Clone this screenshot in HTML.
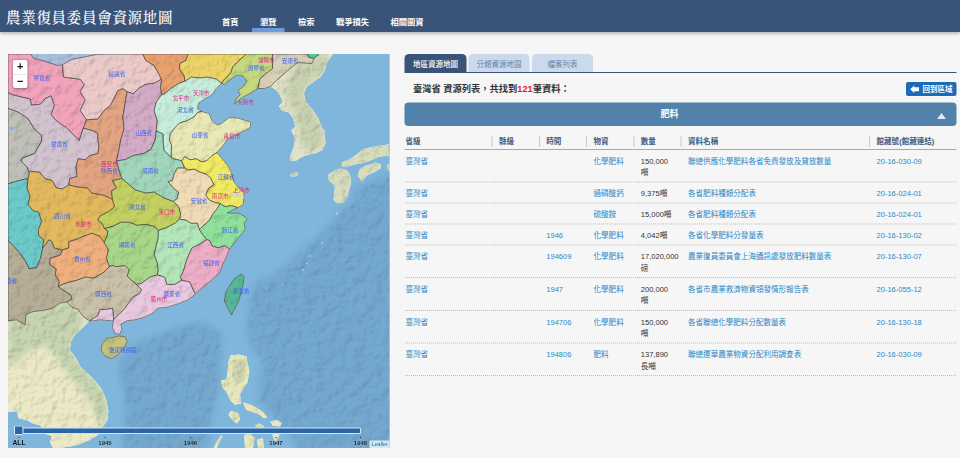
<!DOCTYPE html>
<html lang="zh-Hant">
<head>
<meta charset="utf-8">
<title>農業復員委員會資源地圖</title>
<style>
html,body{margin:0;padding:0;background:#f6f6f6;overflow:hidden;width:960px;height:458px;}
#root{position:absolute;left:0;top:0;width:1920px;height:916px;transform:scale(0.5);transform-origin:0 0;background:#f6f6f6;font-family:"Liberation Sans","Noto Sans CJK TC",sans-serif;color:#333;overflow:hidden;}
#hdr{position:absolute;left:0;top:0;width:1920px;height:64px;background:#3a5479;box-shadow:0 2px 8px rgba(0,0,0,.35);z-index:5;}
#hdr h1{position:absolute;left:12px;top:16px;margin:0;font-family:"Liberation Serif","Noto Serif CJK SC",serif;font-weight:500;font-size:29px;line-height:40px;letter-spacing:1.4px;color:#fff;white-space:nowrap;}
#nav{position:absolute;left:428px;top:30px;height:34px;white-space:nowrap;font-size:0;}
#nav a{display:inline-block;height:34px;padding:0 16px;margin-right:11px;font-size:16.5px;line-height:28px;font-weight:700;color:#fff;text-decoration:none;box-sizing:border-box;}
#nav a.on{border-bottom:8px solid #6b9bdc;}
#map{position:absolute;left:16px;top:108px;width:763px;height:788px;background:#7fb3d8;overflow:hidden;}
#map svg{position:absolute;left:0;top:0;}
#zoomc{position:absolute;left:10px;top:12px;width:29px;border-radius:4px;background:#fff;box-shadow:0 1px 5px rgba(0,0,0,.4);}
#zoomc div{height:27.5px;text-align:center;font:bold 22px/25px "Liberation Sans",sans-serif;color:#111;}
#zoomc div+div{border-top:1px solid #ccc;}
#trk{position:absolute;left:14px;top:747px;width:688px;height:9px;background:#2a65a8;border:2px solid #d4e4f4;border-radius:2px;}
#hnd{position:absolute;left:12px;top:743px;width:15px;height:15px;background:#2a65a8;border:2px solid #dcebf8;border-radius:3px;}
.tk{position:absolute;top:766px;width:60px;margin-left:-30px;text-align:center;font:bold 12px/14px "Liberation Sans",sans-serif;color:#16202b;text-shadow:0 0 2px rgba(255,255,255,.5);}
.tk:before{content:"";display:block;width:2px;height:2px;background:#222;margin:0 auto 3px;}
.tk b{font-size:13.5px;color:#0a0a0a;}
#attr{position:absolute;right:0;bottom:0;height:15px;padding:0 4px;background:rgba(255,255,255,.72);font:10.5px/15px "Liberation Sans",sans-serif;color:#0078a8;}
#right{position:absolute;left:809px;top:108px;width:1104px;}
#tabs{height:36px;border-bottom:2px solid #3a5479;white-space:nowrap;font-size:0;}
#tabs span{display:inline-block;width:122px;height:36px;margin-right:5px;border-radius:9px 9px 0 0;background:#ccd9ea;color:#5f82aa;font-size:15px;line-height:41px;vertical-align:top;overflow:hidden;text-align:center;}
#tabs span.on{background:#3a5479;color:#fff;font-weight:500;width:124px;margin-right:4px;}
#ttl{position:absolute;left:17px;top:54px;font-size:18.5px;line-height:30px;font-weight:700;color:#333;white-space:nowrap;}
#ttl b{color:#f5141c;}
#back{position:absolute;right:0;top:56px;width:101px;height:28px;border-radius:4px;background:#1c6bb9;color:#fff;font-size:15px;line-height:28px;font-weight:700;box-shadow:0 0 0 1px rgba(255,255,255,.6);}
#back svg{position:absolute;left:8px;top:5.5px;}
#back span{position:absolute;left:33px;top:0;white-space:nowrap;}
#sec{position:absolute;left:0;top:97px;width:1104px;height:47px;box-sizing:border-box;padding-right:44px;border-radius:8px;background:#5281a9;color:#fff;font-size:18px;line-height:47px;font-weight:700;text-align:center;}
#sec i{position:absolute;right:21px;top:21px;width:0;height:0;border-left:9px solid transparent;border-right:9px solid transparent;border-bottom:12px solid #dde7f5;}
#tbl{position:absolute;left:0;top:144.5px;width:1104px;border-collapse:collapse;font-size:15.1px;line-height:23px;table-layout:fixed;}
#tbl th{padding:18px 0 4px 0;text-align:left;color:#3f5c82;font-weight:700;border-bottom:2px solid #8eb0cd;white-space:nowrap;}
#tbl th span{display:block;border-left:2px solid #bccbde;padding-left:13px;}
#tbl th:first-child span{border-left:0;padding-left:2px;}
#tbl tr{background:repeating-linear-gradient(90deg,#a6bfd9 0,#a6bfd9 2px,transparent 2px,transparent 4px) 1px 100%/100% 2px no-repeat;}
#tbl tr:first-child{background:none;}
#tbl td{padding:10px 0 9.2px 15px;vertical-align:top;color:#333;}
#tbl td:first-child{padding-left:2px;}
#tbl td.l{color:#2b87c8;}
</style>
</head>
<body>
<div id="root">
<div id="hdr">
<h1>農業復員委員會資源地圖</h1>
<div id="nav"><a>首頁</a><a class="on">瀏覽</a><a>檢索</a><a>戰爭損失</a><a>相關圖資</a></div>
</div>
<div id="map">
<svg width="763" height="788" viewBox="8 54 381.5 394">
<defs>
<filter id="b3" x="-20%" y="-20%" width="140%" height="140%"><feGaussianBlur stdDeviation="3"/></filter>
<filter id="b2" x="-20%" y="-20%" width="140%" height="140%"><feGaussianBlur stdDeviation="2"/></filter>
<filter id="relief" x="0" y="0" width="100%" height="100%" color-interpolation-filters="sRGB">
<feTurbulence type="fractalNoise" baseFrequency="0.11" numOctaves="4" seed="7" result="n"/>
<feDiffuseLighting in="n" surfaceScale="0.48" diffuseConstant="1.40" lighting-color="#ffffff" result="l"><feDistantLight azimuth="225" elevation="45"/></feDiffuseLighting>
<feComposite in="l" in2="SourceGraphic" operator="in" result="lc"/>
<feBlend in="SourceGraphic" in2="lc" mode="multiply"/>
</filter>
<filter id="relief2" x="0" y="0" width="100%" height="100%" color-interpolation-filters="sRGB">
<feTurbulence type="fractalNoise" baseFrequency="0.1" numOctaves="3" seed="11" result="n"/>
<feDiffuseLighting in="n" surfaceScale="0.35" diffuseConstant="1.40" lighting-color="#ffffff" result="l"><feDistantLight azimuth="225" elevation="45"/></feDiffuseLighting>
<feComposite in="l" in2="SourceGraphic" operator="in" result="lc"/>
<feBlend in="SourceGraphic" in2="lc" mode="multiply"/>
</filter>
<mask id="dm" maskUnits="userSpaceOnUse" x="0" y="46" width="400" height="410"><g filter="url(#b3)" fill="#fff">
<path d="M392,172 372,180 356,188 350,204 338,214 322,232 300,252 276,274 256,282 250,300 246,330 254,352 262,360 258,400 286,430 300,452 396,452 396,172Z"/>
<path d="M150,338 180,326 205,322 222,334 220,380 212,420 205,452 122,452 126,404 118,368 128,348Z"/>
</g></mask>
<clipPath id="sea"><path d="M8.0,320.8 16.7,319.8 25.0,325.0 26.0,314.6 33.3,311.5 43.8,310.4 52.1,308.3 60.4,303.1 66.7,302.1 71.9,307.3 78.1,309.4 83.3,316.7 89.6,320.8 82.3,328.1 75.0,334.4 70.8,341.7 69.8,350.0 76.0,358.3 80.2,366.7 87.5,373.4 95.8,381.8 102.1,390.1 106.3,400.5 108.3,410.9 107.3,420.3 102.1,427.6 97.9,434.9 89.6,440.1 79.2,444.3 70.8,446.3 62.5,447.4 60.0,450.0 54.2,450.0 50.0,442.2 52.1,435.9 44.8,433.8 40.6,425.5 33.3,423.4 27.1,420.3 18.8,418.2 16.7,411.3 8.0,412.0Z"/></clipPath><clipPath id="kor"><path d="M270.4,86.5 275.6,89.6 279.8,94.8 282.9,102.1 278.8,106.3 281.9,110.4 289.2,112.5 293.3,118.8 295.4,127.1 291.3,130.2 295.0,138.1 293.7,147.6 290.3,155.7 290.3,160.5 296.4,160.5 302.5,156.4 309.3,154.4 316.0,153.0 322.1,150.3 325.5,143.5 324.8,136.8 324.2,130.0 322.5,129.2 318.3,118.8 313.1,110.4 305.8,102.1 303.8,93.8 306.9,86.5 314.2,81.3 320.4,77.1 324.6,70.8 326.7,62.5 332.9,54.2 332.9,50.0 272.0,50.0 272.0,70.0Z"/></clipPath>
</defs>
<rect x="8" y="54" width="382" height="394" fill="#80b6dc"/>
<g id="deep" mask="url(#dm)"><rect x="0" y="46" width="400" height="410" fill="#74a8ce" filter="url(#relief2)"/></g>
<g filter="url(#relief)"><g id="base"><path d="M30.8,54.0 33.3,58.3 41.7,60.4 58.3,65.6 62.5,64.6 71.9,59.4 87.5,56.3 97.9,54.2 97.9,50.0 30.0,50.0Z" fill="#a9bedb"/><path d="M270.4,86.5 275.6,89.6 279.8,94.8 282.9,102.1 278.8,106.3 281.9,110.4 289.2,112.5 293.3,118.8 295.4,127.1 291.3,130.2 295.0,138.1 293.7,147.6 290.3,155.7 290.3,160.5 296.4,160.5 302.5,156.4 309.3,154.4 316.0,153.0 322.1,150.3 325.5,143.5 324.8,136.8 324.2,130.0 322.5,129.2 318.3,118.8 313.1,110.4 305.8,102.1 303.8,93.8 306.9,86.5 314.2,81.3 320.4,77.1 324.6,70.8 326.7,62.5 332.9,54.2 332.9,50.0 272.0,50.0 272.0,70.0Z" fill="#e0e3c8"/><g clip-path="url(#kor)"><path d="M300.0,56.0 328.0,54.0 324.0,72.0 314.0,80.0 306.0,88.0 304.0,96.0 308.0,104.0 315.0,112.0 320.0,122.0 323.0,132.0 323.0,145.0 316.0,150.0 306.0,152.0 300.0,140.0 298.0,125.0 294.0,112.0 288.0,100.0 284.0,90.0 290.0,75.0Z" fill="#c9d1b0" filter="url(#b3)"/></g><path d="M306.9,50.0 306.9,54.0 309.0,57.5 314.0,58.3 319.4,54.0 319.4,50.0Z" fill="#5fd095" stroke="#333" stroke-width="0.6" stroke-linejoin="round"/><ellipse cx="294.4" cy="174.5" rx="4" ry="1.9" fill="#d0d4b0" transform="rotate(-12 294.4 174.5)"/><path d="M392.0,144.0 381.0,145.6 370.2,147.6 363.4,149.0 356.7,154.4 349.9,159.1 341.8,162.5 341.8,166.6 347.2,166.6 354.0,164.5 362.1,163.2 370.2,160.5 378.3,157.1 385.1,155.7 392.0,156.4Z" fill="#d6dcbc"/><path d="M364.8,165.9 359.4,169.9 358.0,176.0 362.1,181.5 366.1,176.0 374.3,172.0 380.4,168.6 381.0,164.5 375.6,162.5 370.2,164.5Z" fill="#d6dcbc"/><path d="M340.4,168.6 335.0,170.6 328.2,174.7 328.2,180.1 333.6,184.2 335.0,188.0 334.3,193.1 333.6,199.9 337.7,203.3 343.1,202.6 347.2,197.2 349.2,189.0 351.2,182.8 349.9,174.7 347.2,170.6Z" fill="#d6dcbc"/><path d="M392.0,161.0 387.1,165.2 388.5,170.6 392.0,171.0Z" fill="#d6dcbc"/><circle cx="337" cy="213.4" r="1" fill="#c8d0a8"/><circle cx="306.7" cy="263.5" r="0.7" fill="#d8dcb8" opacity=".55"/><circle cx="310" cy="256" r="0.7" fill="#d8dcb8" opacity=".55"/><circle cx="303" cy="270" r="0.7" fill="#d8dcb8" opacity=".55"/><circle cx="283" cy="285" r="0.7" fill="#d8dcb8" opacity=".55"/><circle cx="266" cy="288" r="0.7" fill="#d8dcb8" opacity=".55"/><circle cx="322" cy="243" r="0.7" fill="#d8dcb8" opacity=".55"/><path d="M8.0,320.8 16.7,319.8 25.0,325.0 26.0,314.6 33.3,311.5 43.8,310.4 52.1,308.3 60.4,303.1 66.7,302.1 71.9,307.3 78.1,309.4 83.3,316.7 89.6,320.8 82.3,328.1 75.0,334.4 70.8,341.7 69.8,350.0 76.0,358.3 80.2,366.7 87.5,373.4 95.8,381.8 102.1,390.1 106.3,400.5 108.3,410.9 107.3,420.3 102.1,427.6 97.9,434.9 89.6,440.1 79.2,444.3 70.8,446.3 62.5,447.4 60.0,450.0 54.2,450.0 50.0,442.2 52.1,435.9 44.8,433.8 40.6,425.5 33.3,423.4 27.1,420.3 18.8,418.2 16.7,411.3 8.0,412.0Z" fill="#ece9c6"/><g clip-path="url(#sea)"><path d="M8.0,316.0 26.0,312.0 52.0,306.0 67.0,300.0 86.0,317.0 80.0,330.0 73.0,342.0 72.0,352.0 80.0,362.0 88.0,372.0 98.0,382.0 105.0,392.0 110.0,408.0 109.0,422.0 98.0,422.0 92.0,405.0 84.0,392.0 72.0,380.0 62.0,366.0 52.0,352.0 44.0,345.0 30.0,350.0 18.0,362.0 8.0,368.0Z" fill="#c6d4b0" filter="url(#b3)"/></g><path d="M230.6,355.4 228.5,361.7 227.5,372.1 226.5,379.4 221.3,380.4 222.3,386.7 226.5,391.9 230.6,400.5 234.8,404.7 241.0,403.6 240.0,394.3 243.1,388.8 247.3,382.5 249.4,372.1 247.3,361.7 246.3,356.5 239.0,354.4Z" fill="#e6e6ba"/><path d="M243.1,402.6 250.4,404.7 256.7,407.8 262.9,412.0 267.1,417.2 264.0,418.2 258.8,414.0 252.5,412.0 246.3,409.9Z" fill="#e6e6ba"/><path d="M230.6,410.9 228.5,415.1 232.7,420.3 236.9,423.4 240.0,419.3 237.9,413.0Z" fill="#e6e6ba"/><path d="M270.2,421.3 272.3,425.5 279.6,426.5 281.7,423.4 277.5,420.3Z" fill="#e6e6ba"/><path d="M258.8,423.4 255.0,426.0 260.8,429.0 264.0,426.0Z" fill="#e6e6ba"/><path d="M244.2,434.9 245.2,450.0 252.5,450.0 254.6,438.0 250.0,434.0Z" fill="#e6e6ba"/><path d="M256.7,440.0 258.8,450.0 264.0,450.0 262.9,438.0Z" fill="#e6e6ba"/><path d="M212.9,450.0 217.1,441.1 221.3,434.9 222.5,436.0 219.0,443.0 216.0,450.0Z" fill="#e6e6ba"/><path d="M272.3,434.9 275.4,442.2 279.6,434.9 276.0,432.0Z" fill="#e6e6ba"/><path d="M233.0,360.0 243.0,359.0 246.0,370.0 244.0,381.0 238.0,384.0 232.0,377.0Z" fill="#d0d6b0"/></g>
<g id="prov"><path d="M8.0,54.0 30.8,54.0 33.3,58.3 41.7,60.4 58.3,65.6 62.5,64.6 63.5,77.0 80.2,79.2 84.4,84.4 80.2,91.7 85.4,100.0 80.2,110.4 86.5,119.8 83.3,128.1 79.2,140.6 74.0,135.4 66.7,128.0 56.3,120.8 51.0,114.6 54.2,105.2 51.0,95.8 44.8,99.0 40.6,104.2 31.3,105.2 30.2,99.0 20.8,96.9 12.5,94.8 8.0,92.7Z" fill="#f1a4bb" stroke="#333" stroke-width="0.6" stroke-linejoin="round"/><path d="M8.0,92.7 12.5,94.8 20.8,96.9 30.2,99.0 31.3,105.2 40.6,104.2 44.8,99.0 51.0,95.8 54.2,105.2 51.0,114.6 56.3,120.8 66.7,128.0 74.0,135.4 79.2,140.6 83.3,128.1 91.7,130.2 97.9,133.3 97.9,140.0 99.0,146.3 97.9,153.5 89.6,155.6 85.4,159.8 78.1,158.8 76.0,167.1 77.1,176.5 69.8,178.5 68.8,184.8 62.5,189.0 56.3,187.9 52.1,180.6 44.8,178.5 39.6,172.3 30.2,171.3 29.2,173.3 27.1,167.1 20.8,160.8 22.9,157.7 34.4,153.5 38.5,146.3 41.5,141.0 41.7,135.4 34.4,129.2 28.1,118.8 18.8,112.5 8.0,108.3Z" fill="#d2c3cf" stroke="#333" stroke-width="0.6" stroke-linejoin="round"/><path d="M8.0,108.3 18.8,112.5 28.1,118.8 34.4,129.2 41.7,135.4 41.5,141.0 38.5,146.3 34.4,153.5 22.9,157.7 20.8,160.8 27.1,167.1 29.2,173.3 28.1,178.5 18.8,180.6 8.0,183.8Z" fill="#bfc0b8" stroke="#333" stroke-width="0.6" stroke-linejoin="round"/><path d="M8.0,183.8 18.8,180.6 28.1,178.5 27.1,187.9 30.2,196.3 28.1,204.6 33.3,210.8 38.5,211.9 41.7,221.3 38.5,229.6 38.5,235.4 43.8,239.6 42.7,247.9 40.6,258.3 36.5,267.7 29.2,268.8 25.0,260.4 18.8,252.1 11.5,243.8 8.0,240.6Z" fill="#6ccbc9" stroke="#333" stroke-width="0.6" stroke-linejoin="round"/><path d="M8.0,240.6 11.5,243.8 18.8,252.1 25.0,260.4 29.2,268.8 36.5,267.7 40.6,258.3 42.7,247.9 49.0,239.6 52.1,241.7 54.2,247.9 62.5,250.0 60.4,255.2 50.0,258.3 50.0,264.6 56.3,268.8 55.2,275.0 59.4,281.3 58.3,286.5 62.5,289.6 70.8,294.8 71.9,299.0 66.7,302.1 60.4,303.1 52.1,308.3 43.8,310.4 33.3,311.5 26.0,314.6 25.0,325.0 16.7,319.8 8.0,320.8Z" fill="#b6ae97" stroke="#333" stroke-width="0.6" stroke-linejoin="round"/><path d="M28.1,178.5 29.2,173.3 30.2,171.3 39.6,172.3 44.8,178.5 52.1,180.6 56.3,187.9 62.5,189.0 68.8,184.8 77.1,186.9 87.5,187.9 91.7,193.1 104.2,195.2 112.5,199.4 114.6,206.7 108.3,211.9 100.0,216.0 97.9,220.2 102.1,223.3 104.5,228.5 108.0,231.0 107.3,235.4 104.2,242.7 100.0,236.5 91.7,233.3 83.3,236.5 76.0,239.6 68.8,241.7 68.8,247.9 62.5,250.0 54.2,247.9 52.1,241.7 49.0,239.6 42.7,247.9 43.8,239.6 38.5,235.4 38.5,229.6 41.7,221.3 38.5,211.9 33.3,210.8 28.1,204.6 30.2,196.3 27.1,187.9Z" fill="#e2b95f" stroke="#333" stroke-width="0.6" stroke-linejoin="round"/><path d="M86.5,119.8 97.9,118.8 104.2,110.4 110.4,105.2 114.6,96.9 117.7,90.6 122.9,88.5 127.1,91.7 125.0,104.2 122.9,116.7 124.0,129.2 120.8,139.6 119.8,145.0 118.8,150.4 116.7,160.8 118.8,169.2 121.9,178.5 112.5,180.6 116.7,187.9 111.5,191.0 112.5,199.4 104.2,195.2 91.7,193.1 87.5,187.9 77.1,186.9 68.8,184.8 69.8,178.5 77.1,176.5 76.0,167.1 78.1,158.8 85.4,159.8 89.6,155.6 97.9,153.5 99.0,146.3 97.9,140.0 97.9,133.3 91.7,130.2 83.3,128.1Z" fill="#e3a482" stroke="#333" stroke-width="0.6" stroke-linejoin="round"/><path d="M62.5,64.6 71.9,59.4 87.5,56.3 97.9,54.2 142.7,54.0 145.8,60.4 154.2,65.6 158.3,72.9 161.5,79.2 154.2,83.3 145.8,84.4 138.5,88.5 133.3,93.8 127.1,91.7 122.9,88.5 117.7,90.6 114.6,96.9 110.4,105.2 104.2,110.4 97.9,118.8 86.5,119.8 80.2,110.4 85.4,100.0 80.2,91.7 84.4,84.4 80.2,79.2 63.5,77.0Z" fill="#edcaca" stroke="#333" stroke-width="0.6" stroke-linejoin="round"/><path d="M142.7,54.0 188.1,54.0 186.0,60.4 179.8,63.5 179.8,69.8 184.0,75.0 185.0,81.3 179.2,83.3 170.8,88.5 164.6,93.8 161.5,94.8 160.4,87.5 161.5,79.2 158.3,72.9 154.2,65.6 145.8,60.4Z" fill="#e9a170" stroke="#333" stroke-width="0.6" stroke-linejoin="round"/><path d="M188.1,54.0 246.5,54.0 239.2,60.4 232.9,66.7 230.8,72.9 224.6,79.2 221.5,83.3 216.3,79.2 207.9,77.1 199.6,78.1 191.3,77.1 185.0,81.3 184.0,75.0 179.8,69.8 179.8,63.5 186.0,60.4Z" fill="#edd468" stroke="#333" stroke-width="0.6" stroke-linejoin="round"/><path d="M246.5,54.0 272.5,54.0 272.5,68.8 264.2,75.0 260.0,79.2 257.9,88.5 251.7,92.7 243.3,96.9 238.1,101.0 234.6,103.8 236.0,99.0 240.2,94.8 238.1,90.6 243.3,86.5 246.5,81.3 243.3,76.0 237.1,75.0 230.8,79.2 224.6,84.4 221.5,83.3 224.6,79.2 230.8,72.9 232.9,66.7 239.2,60.4Z" fill="#c6d980" stroke="#333" stroke-width="0.6" stroke-linejoin="round"/><path d="M272.5,54.0 306.9,54.0 309.0,57.5 314.0,58.3 312.0,63.5 297.5,62.5 292.3,66.7 285.0,72.9 276.7,80.2 270.4,86.5 264.2,88.5 257.9,88.5 260.0,79.2 264.2,75.0 272.5,68.8Z" fill="#d8d0b8" stroke="#333" stroke-width="0.6" stroke-linejoin="round"/><path d="M161.5,79.2 160.4,87.5 161.5,94.8 156.3,102.1 154.2,110.4 157.3,120.8 156.3,131.0 155.2,140.0 151.0,149.4 143.8,153.5 133.3,155.6 125.0,159.8 116.7,160.8 118.8,150.4 119.8,145.0 120.8,139.6 124.0,129.2 122.9,116.7 125.0,104.2 127.1,91.7 133.3,93.8 138.5,88.5 145.8,84.4 154.2,83.3Z" fill="#d3abc6" stroke="#333" stroke-width="0.6" stroke-linejoin="round"/><path d="M185.0,81.3 191.3,77.1 199.6,78.1 207.9,77.1 216.3,79.2 221.5,83.3 216.3,88.5 212.1,94.8 204.8,99.0 198.5,103.1 197.5,108.3 201.7,111.5 197.5,112.5 194.4,116.7 187.1,120.8 179.8,122.9 174.6,128.1 170.4,133.3 169.4,139.6 171.5,145.0 171.3,152.5 171.3,157.7 164.0,150.4 162.9,140.0 163.0,134.0 156.3,131.0 157.3,120.8 154.2,110.4 156.3,102.1 161.5,94.8 164.6,93.8 170.8,88.5 179.2,83.3Z" fill="#c6eedb" stroke="#333" stroke-width="0.6" stroke-linejoin="round"/><path d="M201.7,111.5 209.0,113.5 212.1,120.8 217.3,125.0 222.5,122.9 228.8,117.7 237.1,117.7 243.3,119.8 250.6,121.9 250.6,127.1 245.4,130.2 239.2,133.3 231.9,136.5 226.7,139.6 225.0,143.0 222.3,146.3 217.1,152.5 211.9,155.6 206.7,160.8 201.5,161.9 196.3,158.8 190.0,159.8 184.8,156.7 181.7,160.8 173.3,158.8 171.3,157.7 171.3,152.5 171.5,145.0 169.4,139.6 170.4,133.3 174.6,128.1 179.8,122.9 187.1,120.8 194.4,116.7 197.5,112.5Z" fill="#e9e9b6" stroke="#333" stroke-width="0.6" stroke-linejoin="round"/><path d="M156.3,131.0 163.0,134.0 162.9,140.0 164.0,150.4 171.3,157.7 173.3,158.8 181.7,160.8 184.8,168.1 177.5,168.1 174.4,173.3 172.3,180.6 168.1,181.7 173.3,187.9 178.5,192.1 177.5,198.3 173.3,201.5 164.6,198.3 154.2,192.1 145.8,193.1 135.4,190.0 129.2,184.8 121.9,178.5 118.8,169.2 116.7,160.8 125.0,159.8 133.3,155.6 143.8,153.5 151.0,149.4 155.2,140.0Z" fill="#a2d6bc" stroke="#333" stroke-width="0.6" stroke-linejoin="round"/><path d="M217.1,152.5 222.3,158.8 227.5,165.0 231.7,173.3 233.8,181.7 237.9,186.9 244.2,192.1 244.2,197.3 243.1,204.6 237.9,207.7 231.7,205.6 225.4,206.7 220.2,203.5 215.0,202.5 209.8,200.4 205.6,195.2 208.8,187.9 214.0,184.8 210.8,178.5 206.7,174.4 200.4,172.3 194.2,169.2 187.9,170.2 184.8,168.1 181.7,160.8 184.8,156.7 190.0,159.8 196.3,158.8 201.5,161.9 206.7,160.8 211.9,155.6Z" fill="#f1ea62" stroke="#333" stroke-width="0.6" stroke-linejoin="round"/><path d="M184.8,168.1 187.9,170.2 194.2,169.2 200.4,172.3 206.7,174.4 210.8,178.5 214.0,184.8 208.8,187.9 205.6,195.2 209.8,200.4 215.0,202.5 220.2,203.5 217.1,208.8 212.9,214.0 209.8,220.2 203.5,225.4 199.4,229.6 197.3,223.3 191.0,223.3 185.8,220.2 179.6,219.2 180.6,214.0 178.5,206.7 173.3,201.5 177.5,198.3 178.5,192.1 173.3,187.9 168.1,181.7 172.3,180.6 174.4,173.3 177.5,168.1Z" fill="#f1dcb6" stroke="#333" stroke-width="0.6" stroke-linejoin="round"/><path d="M121.9,178.5 129.2,184.8 135.4,190.0 145.8,193.1 154.2,192.1 164.6,198.3 173.3,201.5 178.5,206.7 180.6,214.0 179.6,219.2 175.0,223.3 166.7,227.5 158.3,230.6 154.2,226.5 145.8,224.4 137.5,225.4 129.2,222.3 120.8,222.3 112.5,226.5 104.5,228.5 102.1,223.3 97.9,220.2 100.0,216.0 108.3,211.9 114.6,206.7 112.5,199.4 111.5,191.0 116.7,187.9 112.5,180.6Z" fill="#c3d162" stroke="#333" stroke-width="0.6" stroke-linejoin="round"/><path d="M104.5,228.5 112.5,226.5 120.8,222.3 129.2,222.3 137.5,225.4 145.8,224.4 154.2,226.5 158.3,230.6 158.3,237.5 156.3,245.8 154.2,254.2 157.3,262.5 158.3,269.8 157.3,275.0 150.0,277.1 145.8,280.2 141.7,283.3 136.5,284.4 131.3,280.2 127.1,276.0 129.2,269.8 125.0,265.6 116.7,266.7 112.5,265.6 109.4,266.7 106.3,258.3 108.3,250.0 104.2,242.7 107.3,235.4 108.0,231.0Z" fill="#a9d78a" stroke="#333" stroke-width="0.6" stroke-linejoin="round"/><path d="M179.6,219.2 185.8,220.2 191.0,223.3 197.3,223.3 199.4,229.6 202.5,234.4 206.7,239.6 200.4,243.8 192.1,247.9 189.0,254.2 185.8,262.5 183.8,269.8 180.6,277.1 181.7,280.2 175.0,284.4 166.7,284.4 164.6,277.1 157.3,275.0 158.3,269.8 157.3,262.5 154.2,254.2 156.3,245.8 158.3,237.5 158.3,230.6 166.7,227.5 175.0,223.3Z" fill="#b3e7b9" stroke="#333" stroke-width="0.6" stroke-linejoin="round"/><path d="M237.9,207.7 232.0,210.5 227.2,213.0 233.0,213.2 237.9,212.9 244.2,216.0 247.3,219.2 244.2,223.3 245.2,229.6 242.1,233.3 237.9,238.5 233.8,243.8 229.6,249.0 224.4,245.8 218.1,247.9 211.9,245.8 209.8,240.6 206.7,239.6 202.5,234.4 199.4,229.6 203.5,225.4 209.8,220.2 212.9,214.0 217.1,208.8 220.2,203.5 225.4,206.7 231.7,205.6Z" fill="#8fe19d" stroke="#333" stroke-width="0.6" stroke-linejoin="round"/><path d="M206.7,239.6 209.8,240.6 211.9,245.8 218.1,247.9 224.4,245.8 229.6,249.0 227.5,254.2 225.4,259.4 222.3,265.6 220.2,271.9 215.0,277.1 208.8,282.3 202.5,287.5 195.2,293.8 192.1,287.5 190.0,282.3 181.7,280.2 180.6,277.1 183.8,269.8 185.8,262.5 189.0,254.2 192.1,247.9 200.4,243.8Z" fill="#eeafc6" stroke="#333" stroke-width="0.6" stroke-linejoin="round"/><path d="M62.5,250.0 68.8,247.9 68.8,241.7 76.0,239.6 83.3,236.5 91.7,233.3 100.0,236.5 104.2,242.7 108.3,250.0 106.3,258.3 109.4,266.7 103.1,272.9 93.8,278.1 85.4,277.1 77.1,280.2 68.8,282.3 62.5,284.4 58.3,286.5 59.4,281.3 55.2,275.0 56.3,268.8 50.0,264.6 50.0,258.3 60.4,255.2Z" fill="#f0b07e" stroke="#333" stroke-width="0.6" stroke-linejoin="round"/><path d="M58.3,286.5 62.5,284.4 68.8,282.3 77.1,280.2 85.4,277.1 93.8,278.1 103.1,272.9 109.4,266.7 112.5,265.6 116.7,266.7 125.0,265.6 129.2,269.8 127.1,276.0 131.3,280.2 136.5,284.4 141.7,289.6 139.6,293.8 133.3,296.9 129.2,302.1 125.0,308.3 118.8,314.6 113.5,319.8 113.5,317.7 112.5,308.3 106.3,309.4 100.0,309.4 97.9,315.6 89.6,320.8 83.3,316.7 78.1,309.4 71.9,307.3 66.7,302.1 71.9,299.0 70.8,294.8 62.5,289.6Z" fill="#c9c1a9" stroke="#333" stroke-width="0.6" stroke-linejoin="round"/><path d="M136.5,284.4 141.7,283.3 145.8,280.2 150.0,277.1 157.3,275.0 164.6,277.1 166.7,284.4 175.0,284.4 181.7,280.2 190.0,282.3 192.1,287.5 195.2,293.8 191.0,297.9 187.5,300.0 177.1,304.2 166.7,307.3 157.3,308.3 154.2,312.5 145.8,316.7 135.4,319.8 127.1,320.8 120.8,324.0 121.9,329.2 119.8,334.4 114.6,333.3 112.5,327.1 113.5,319.8 118.8,314.6 125.0,308.3 129.2,302.1 133.3,296.9 139.6,293.8 141.7,289.6Z" fill="#e9c9e1" stroke="#333" stroke-width="0.6" stroke-linejoin="round"/><path d="M89.6,320.8 97.9,315.6 100.0,309.4 106.3,309.4 112.5,308.3 113.5,317.7 113.5,319.8 111.5,320.8 100.0,319.8 93.8,320.8Z" fill="#e9c9e1" stroke="#333" stroke-width="0.6" stroke-linejoin="round"/><path d="M106.3,338.5 102.1,343.8 101.0,351.0 105.2,356.3 111.5,358.8 117.7,355.2 124.0,347.9 127.1,341.7 125.0,336.5 118.8,335.8 112.5,337.5Z" fill="#c4c47e" stroke="#333" stroke-width="0.6" stroke-linejoin="round"/><path d="M240.0,274.6 234.8,278.1 229.6,285.4 225.4,292.7 224.4,301.0 227.5,308.3 231.7,315.0 233.8,310.4 237.9,303.1 241.0,293.8 243.1,284.4 244.2,277.1 242.5,274.6Z" fill="#58b897" stroke="#333" stroke-width="0.6" stroke-linejoin="round"/><path d="M231.8,192.0 236.0,192.4 241.0,194.8 244.4,197.4 242.5,198.6 238.0,196.6 233.0,194.4Z" fill="#c4dbea"/><ellipse cx="11.5" cy="128.5" rx="3" ry="1.8" fill="#8fb4d8"/></g></g>
<g id="lab" font-family="'Liberation Sans','Noto Sans CJK TC',sans-serif" font-size="5.6" font-weight="400" text-anchor="middle"><text x="42" y="80.0" fill="#3a5ef6">寧夏省</text><text x="117" y="75.5" fill="#3a5ef6">綏遠省</text><text x="59.4" y="146.2" fill="#3a5ef6">甘肅省</text><text x="143.8" y="134.9" fill="#3a5ef6">山西省</text><text x="180.8" y="100.3" fill="#e3258c">北平市</text><text x="201.3" y="95.3" fill="#e3258c">天津市</text><text x="185.4" y="112.4" fill="#3a5ef6">河北省</text><text x="200" y="136.8" fill="#3a5ef6">山東省</text><text x="231.9" y="138.0" fill="#e3258c">青島市</text><text x="245.4" y="103.7" fill="#e3258c">大連市</text><text x="256.3" y="70.3" fill="#3a5ef6">遼寧省</text><text x="266.3" y="62.4" fill="#e3258c">瀋陽市</text><text x="290.2" y="62.8" fill="#3a5ef6">安東省</text><text x="109.4" y="165.5" fill="#e3258c">西安市</text><text x="109.4" y="172.8" fill="#3a5ef6">陝西省</text><text x="150.4" y="172.8" fill="#3a5ef6">河南省</text><text x="137.5" y="209.1" fill="#3a5ef6">湖北省</text><text x="166.7" y="213.9" fill="#e3258c">漢口市</text><text x="62.5" y="218.0" fill="#3a5ef6">四川省</text><text x="83.3" y="226.0" fill="#e3258c">重慶市</text><text x="199" y="203.0" fill="#3a5ef6">安徽省</text><text x="226" y="178.5" fill="#3a5ef6">江蘇省</text><text x="241.5" y="192.0" fill="#e3258c">上海市</text><text x="220.2" y="197.6" fill="#e3258c">南京市</text><text x="230" y="231.6" fill="#3a5ef6">浙江省</text><text x="127.1" y="247.4" fill="#3a5ef6">湖南省</text><text x="175.6" y="247.2" fill="#3a5ef6">江西省</text><text x="82.3" y="261.4" fill="#3a5ef6">貴州省</text><text x="8.5" y="283.3" fill="#3a5ef6">雲南省</text><text x="103.5" y="296.4" fill="#3a5ef6">廣西省</text><text x="171.9" y="295.8" fill="#3a5ef6">廣東省</text><text x="159" y="301.0" fill="#e3258c">廣州市</text><text x="211.5" y="265.1" fill="#3a5ef6">福建省</text><text x="241" y="292.6" fill="#3a5ef6">臺灣省</text><text x="122.9" y="351.6" fill="#3a5ef6">瓊崖特別區</text></g>
</svg>
<div id="zoomc"><div>+</div><div>−</div></div>
<div id="trk"></div><div id="hnd"></div>
<div class="tk" style="left:22px"><b>ALL</b></div><div class="tk" style="left:194px">1945</div><div class="tk" style="left:365px">1946</div><div class="tk" style="left:536px">1947</div><div class="tk" style="left:705px">1948</div>
<div id="attr">Leaflet</div>
</div>
<div id="right">
<div id="tabs"><span class="on">地區資源地圖</span><span>分類資源地圖</span><span>檔案列表</span></div>
<div id="ttl">臺灣省 資源列表，共找到<b>121</b>筆資料：</div>
<div id="back"><svg width="19" height="17" viewBox="0 0 18 16"><path d="M0.5,8 L8,0.8 L8,4.4 L16.4,4.4 Q17.4,4.4 17.4,5.4 L17.4,10.6 Q17.4,11.6 16.4,11.6 L8,11.6 L8,15.2 Z" fill="#fff"/></svg><span>回到區域</span></div>
<div id="sec">肥料<i></i></div>
<table id="tbl">
<colgroup><col style="width:174px"><col style="width:94.5px"><col style="width:94.5px"><col style="width:94.5px"><col style="width:94.5px"><col style="width:377px"><col></colgroup>
<tr><th><span>省級</span></th><th><span>縣級</span></th><th><span>時間</span></th><th><span>物資</span></th><th><span>數量</span></th><th><span>資料名稱</span></th><th><span>館藏號(館藏連結)</span></th></tr>
<tr><td class="l">臺灣省</td><td></td><td></td><td class="l">化學肥料</td><td>150,000<br>噸</td><td class="l">聯總供應化學肥料各省免費發放及貸放數量</td><td class="l">20-16-030-09</td></tr>
<tr><td class="l">臺灣省</td><td></td><td></td><td class="l">過磷酸鈣</td><td>9,375噸</td><td class="l">各省肥料種類分配表</td><td class="l">20-16-024-01</td></tr>
<tr><td class="l">臺灣省</td><td></td><td></td><td class="l">硫酸銨</td><td>15,000噸</td><td class="l">各省肥料種類分配表</td><td class="l">20-16-024-01</td></tr>
<tr><td class="l">臺灣省</td><td></td><td class="l">1946</td><td class="l">化學肥料</td><td>4,042噸</td><td class="l">各省化學肥料分發量表</td><td class="l">20-16-130-02</td></tr>
<tr><td class="l">臺灣省</td><td></td><td class="l">194609</td><td class="l">化學肥料</td><td>17,020,000<br>磅</td><td class="l">農業復員委員會上海通訊處發放肥料數量表</td><td class="l">20-16-130-07</td></tr>
<tr><td class="l">臺灣省</td><td></td><td class="l">1947</td><td class="l">化學肥料</td><td>200,000<br>噸</td><td class="l">各省市農業救濟物資領發情形報告表</td><td class="l">20-16-055-12</td></tr>
<tr><td class="l">臺灣省</td><td></td><td class="l">194706</td><td class="l">化學肥料</td><td>150,000<br>噸</td><td class="l">各省聯總化學肥料分配數量表</td><td class="l">20-16-130-18</td></tr>
<tr><td class="l">臺灣省</td><td></td><td class="l">194806</td><td class="l">肥料</td><td>137,890<br>長噸</td><td class="l">聯總運華農業物資分配利用調查表</td><td class="l">20-16-030-09</td></tr>
</table>
</div>
</div>
</body>
</html>
